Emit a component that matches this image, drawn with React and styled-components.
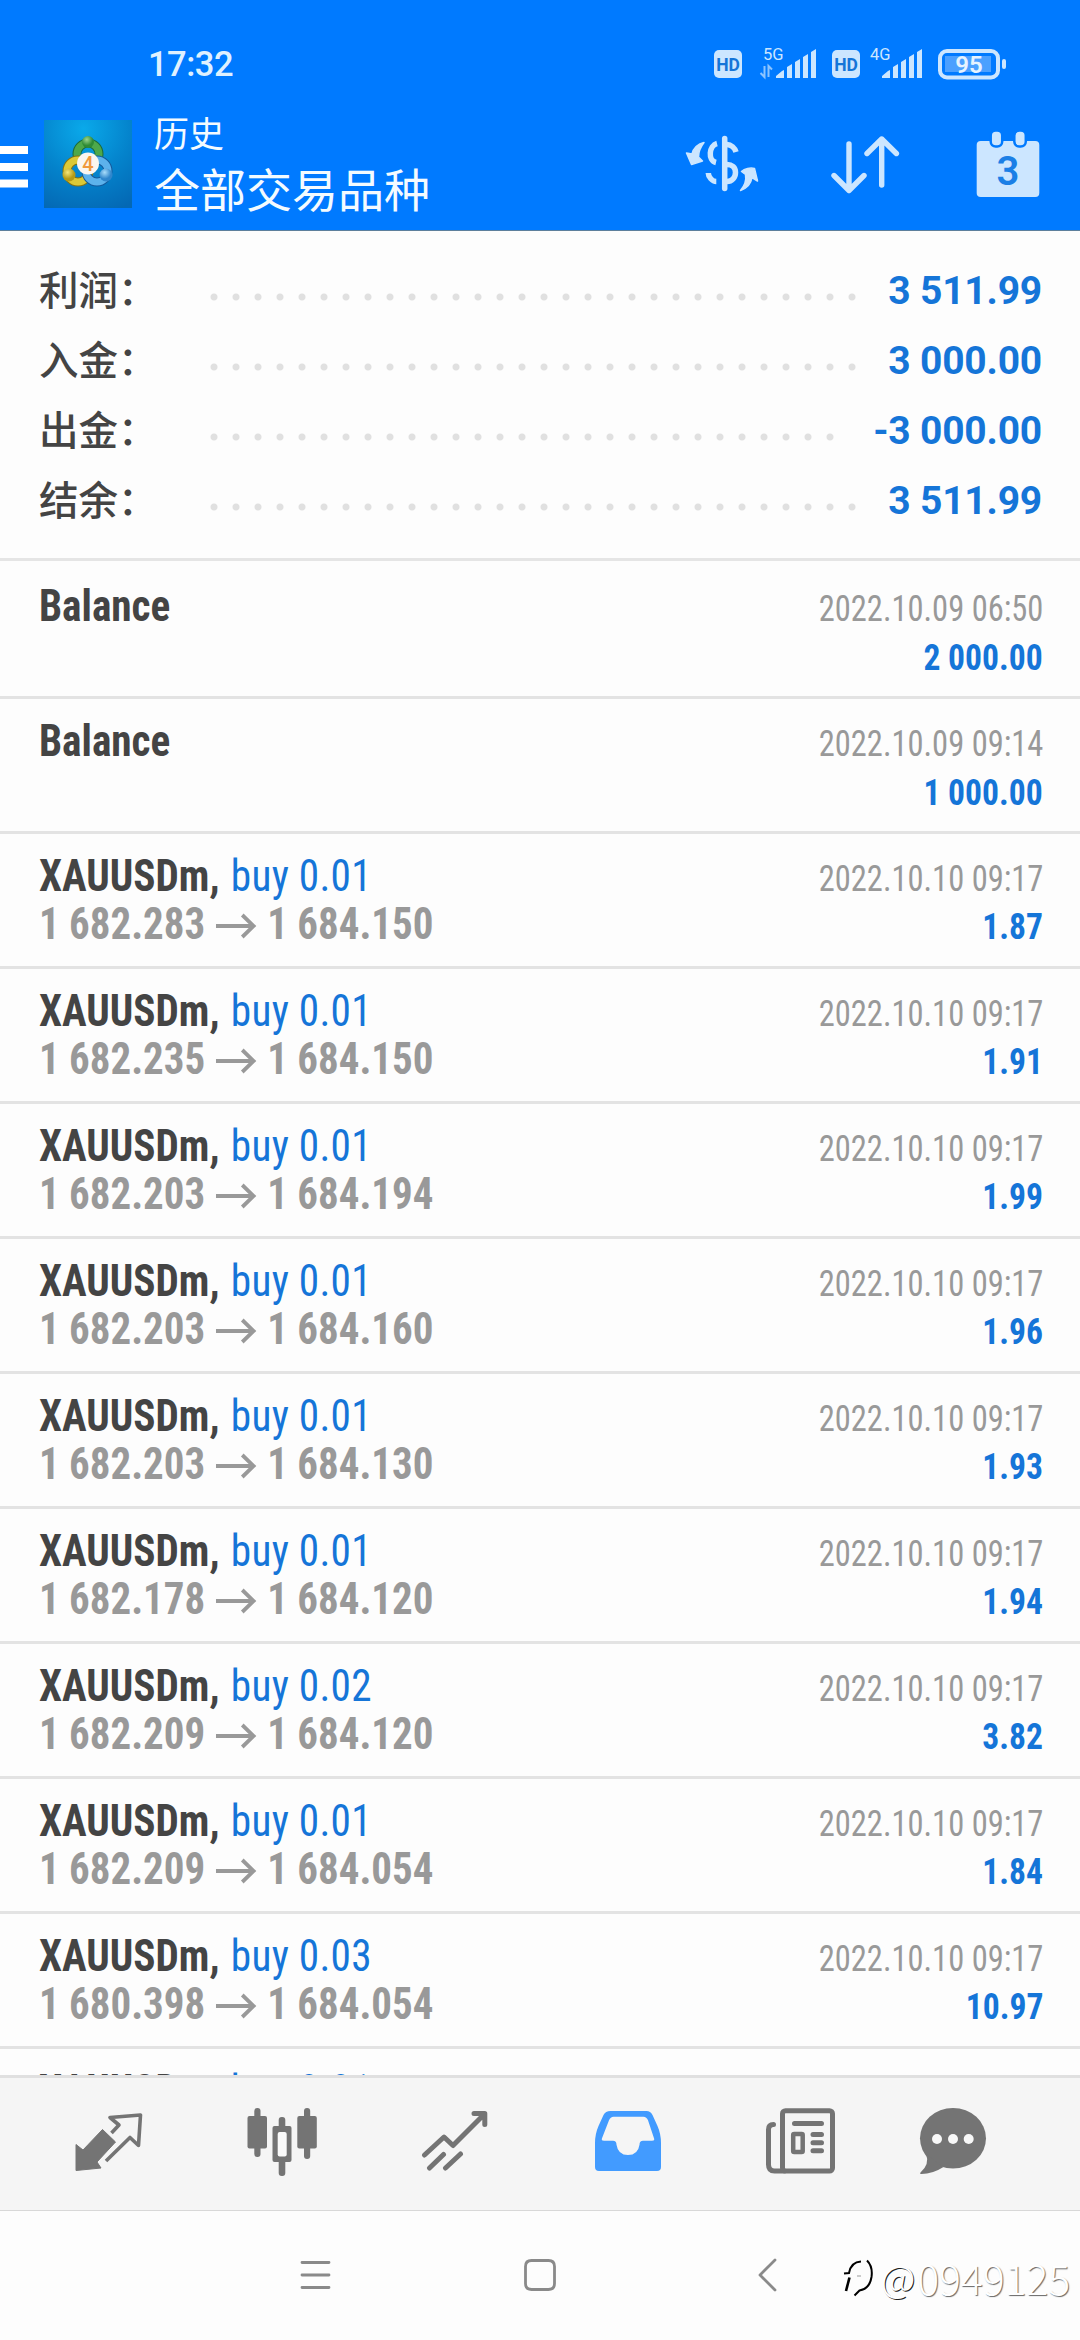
import React from "react";
import styled, { createGlobalStyle } from "styled-components";

const GlobalStyle = createGlobalStyle`
  * {
    box-sizing: border-box;
  }

  body {
    margin: 0;
    background: #fdfdfd;
    font-family: Roboto, "Noto Sans CJK SC", sans-serif;
  }

  svg {
    display: block;
    flex-shrink: 0;
  }
`;

const Screen = styled.div`
  display: flex;
  flex-direction: column;
  width: 1080px;
  height: 2340px;
  overflow: hidden;
  background: #fdfdfd;
`;

const Header = styled.header`
  height: 230px;
  flex-shrink: 0;
  background: #007aff;
  box-shadow: 0 1px 0 #5d7f9c;
`;

const StatusBar = styled.div`
  display: flex;
  align-items: center;
  justify-content: space-between;
  height: 96px;
  padding: 32px 72px 0 148px;
`;

const Clock = styled.span`
  font-size: 34.5px;
  font-weight: 500;
  line-height: 64px;
  letter-spacing: -0.5px;
  color: #dff1ff;
`;

const AppBar = styled.div`
  display: flex;
  align-items: center;
  height: 134px;
  padding: 2px 40px 0 0;
`;

const Titles = styled.div`
  display: flex;
  flex-direction: column;
  flex: 1;
  margin: 0 0 2px 22px;
  font-family: "Noto Sans CJK SC", sans-serif;
  font-weight: 400;
  color: #f4fbff;
`;

const Title = styled.span`
  font-size: 35px;
  line-height: 48px;
`;

const Subtitle = styled.span`
  font-size: 46px;
  line-height: 62px;
`;

const Logo = styled.div`
  margin-left: 16px;
`;

const Actions = styled.div`
  display: flex;
  align-items: center;
  gap: 72px;
`;

const Summary = styled.section`
  flex-shrink: 0;
  height: 331px;
  padding: 24px 38px 0 39px;
  border-bottom: 3px solid #e5e5e5;
`;

const SummaryRow = styled.div`
  display: flex;
  align-items: center;
  height: 70px;
`;

const SummaryLabel = styled.span`
  width: 164px;
  margin-bottom: 3px;
  font-family: "Noto Sans CJK SC", sans-serif;
  font-size: 39.5px;
  font-weight: 500;
  line-height: 70px;
  color: #444;
`;

const Leader = styled.span`
  width: ${({ $dots }) => $dots * 22}px;
  height: 8px;
  margin-top: 16px;
  background: radial-gradient(circle at 11px 4px, #e0e0e0 3px, transparent 4px) 0 0 / 22px 8px repeat-x;
`;

const SummaryValue = styled.span`
  flex: 1;
  margin-top: 3px;
  text-align: right;
  font-size: 39px;
  font-weight: 700;
  letter-spacing: -0.2px;
  white-space: nowrap;
  color: #1575d8;
`;

const List = styled.main`
  flex: 1;
  min-height: 0;
  overflow: hidden;
  padding-top: 3px;
`;

const Deal = styled.div`
  height: 135px;
  padding: 19px 37px 0 39px;
  border-bottom: 3px solid #e3e3e3;
  font-family: "Roboto Condensed", Roboto, sans-serif;
`;

const DealLine = styled.div`
  display: flex;
  align-items: baseline;
  justify-content: space-between;
  height: 48px;
  line-height: 48px;
  white-space: pre;
`;

const Symbol = styled.span`
  font-size: 43.5px;
  font-weight: 700;
  color: #444;
  transform: scaleX(0.947);
  transform-origin: left;
`;

const Side = styled.span`
  margin-left: 2px;
  font-weight: 400;
  letter-spacing: 0.3px;
  color: #1575d8;
`;

const Price = styled.span`
  display: flex;
  align-items: center;
  font-size: 43.5px;
  font-weight: 700;
  color: #999;
  transform: scaleX(0.941);
  transform-origin: left;
`;

const Arrow = styled.svg`
  margin: 2px 11px 0 11px;
`;

const Time = styled.span`
  font-size: 36.5px;
  color: #999;
  transform: scaleX(0.89);
  transform-origin: right;
`;

const Profit = styled.span`
  margin-left: auto;
  padding-top: ${({ $alone }) => ($alone ? 3 : 0)}px;
  font-size: 36.5px;
  font-weight: 700;
  color: #1575d8;
  transform: scaleX(0.92);
  transform-origin: right;
`;

const TabBar = styled.nav`
  display: flex;
  align-items: center;
  flex-shrink: 0;
  height: 136px;
  padding: 0 0 4px 22px;
  border-top: 3px solid #e0e0e0;
  border-bottom: 1px solid #d8d8d8;
  background: #f5f5f5;
  color: #747474;
`;

const Tab = styled.div`
  display: flex;
  justify-content: center;
  width: ${({ $narrow }) => ($narrow ? 130 : 173.2)}px;
  color: ${({ $active }) => ($active ? "#429bff" : "inherit")};
`;

const NavBar = styled.div`
  position: relative;
  display: flex;
  align-items: center;
  justify-content: center;
  gap: 191px;
  flex-shrink: 0;
  height: 129px;
  padding-bottom: 1px;
  color: #8a8a8a;
`;

const Watermark = styled.div`
  position: absolute;
  right: 10px;
  top: 34px;
  display: flex;
  align-items: center;
  font-family: "Noto Sans CJK SC", sans-serif;
  font-size: 41px;
  font-weight: 300;
  line-height: 64px;
  letter-spacing: -0.1px;
  color: #fff;
  text-shadow: 1px 1px 1px rgba(0, 0, 0, 0.6);
`;

const At = styled.span`
  margin: 0 2px 0 5px;
  font-size: 38px;
  font-weight: 300;
  text-shadow: 1px 1px 0 #222;
`;

const HdBadge = ({ x }) => (
  <g>
    <rect x={x} y="50" width="28" height="28" rx="5" fill="#cce6ff" />
    <text x={x + 14} y="70.5" textAnchor="middle" fontSize="17.5" fontWeight="700" fill="#1575d8">
      HD
    </text>
  </g>
);

const Signal = ({ x }) => (
  <path
    transform={`translate(${x} 0)`}
    fill="#cce6ff"
    d="M0 78v-2l6-5 2-1v8zM11 78v-11l5-3v14zM19 78v-16l5-3v19zM27 78v-21l5-3v24zM35 78v-26l5-3v29z"
  />
);

const StatusIcons = () => (
  <svg width="298" height="64" viewBox="710 32 298 64">
    <HdBadge x={714} />
    <text x="763" y="59.5" fontSize="16.5" fill="#cce6ff">5G</text>
    <path d="M764.5 66v11l-4-4M768.5 77v-11l3.5 3.5" fill="none" stroke="#8cc4ff" strokeWidth="2" />
    <Signal x={776} />
    <HdBadge x={832} />
    <text x="870" y="59.5" fontSize="16.5" fill="#cce6ff">4G</text>
    <Signal x={882} />
    <rect x="940" y="51" width="58" height="26.500" rx="7" fill="none" stroke="#cce6ff" strokeWidth="4" />
    <rect x="945" y="56" width="46" height="16" fill="#4ba0ff" />
    <text x="969" y="72.5" textAnchor="middle" fontSize="24" fontWeight="600" fill="#e6f3ff">95</text>
    <rect x="1002" y="59" width="4" height="10" rx="2" fill="#cce6ff" />
  </svg>
);

const MenuIcon = () => (
  <svg width="28" height="68" viewBox="0 130 28 68" fill="#fff">
    <path d="M0 146h28v8H0zM0 163h28v8H0zM0 179.500h28v8H0z" />
  </svg>
);

const AppLogo = () => (
  <svg width="88" height="88" viewBox="0 0 88 88">
    <defs>
      <radialGradient id="tile" cx="0.45" cy="0.1" r="1">
        <stop offset="0" stopColor="#0aa9ea" />
        <stop offset="0.55" stopColor="#0482cb" />
        <stop offset="1" stopColor="#0468b4" />
      </radialGradient>
      <radialGradient id="green" cx="0.4" cy="0.3">
        <stop offset="0" stopColor="#9ad48c" />
        <stop offset="1" stopColor="#2f8b35" />
      </radialGradient>
      <radialGradient id="yellow" cx="0.4" cy="0.3">
        <stop offset="0" stopColor="#f5e67a" />
        <stop offset="1" stopColor="#b49a16" />
      </radialGradient>
      <radialGradient id="sky" cx="0.4" cy="0.3">
        <stop offset="0" stopColor="#a8dcfa" />
        <stop offset="1" stopColor="#2f86cc" />
      </radialGradient>
    </defs>
    <rect width="88" height="88" fill="url(#tile)" />
    <g fill="none" strokeWidth="7">
      <circle cx="44" cy="34" r="11" stroke="#1c6a3a" strokeWidth="9" />
      <circle cx="44" cy="34" r="11" stroke="#4ea84a" />
      <circle cx="34" cy="51" r="11" stroke="#857312" strokeWidth="9" />
      <circle cx="34" cy="51" r="11" stroke="#dcc936" />
      <circle cx="53" cy="51" r="11" stroke="#145a9c" strokeWidth="9" />
      <circle cx="53" cy="51" r="11" stroke="#5cb2ec" />
    </g>
    <circle cx="44" cy="22" r="6" fill="url(#green)" />
    <circle cx="25" cy="55" r="6.500" fill="url(#yellow)" />
    <circle cx="62" cy="55" r="6.500" fill="url(#sky)" />
    <circle cx="44" cy="43.500" r="11" fill="#faf6f0" />
    <text x="44" y="50.500" textAnchor="middle" fontSize="20" fontWeight="500" fill="#f09a3c">4</text>
  </svg>
);

const CurrencyIcon = () => (
  <svg width="74" height="68" viewBox="685 130 74 68" fill="none" stroke="#cce6ff" strokeWidth="5.500">
    <path d="M724.700 138.500v50" strokeLinecap="round" />
    <path d="M717 143.500c-8 2-9.500 17-1 19M708.300 173c0 4 4 8.500 8 8.500M727 144.500c4 0 8 3.500 9 7.500M727 164.500c5 0 8.500 3 8.500 8s-3.500 9-8.500 9" />
    <path
      fill="#cce6ff"
      strokeWidth="1.500"
      strokeLinejoin="round"
      d="M704 142.500c-6 1-11 6-12 11.500l-5.500-1 5 11.500 11-3.500-4-4c0-6 2-10 5.500-14.500zM740.500 190.500c6-2 10.500-6.500 11.500-13l5.500 3.500-3-12.500c-4-1-10 0-13 3l4 3c1 6-1 11.500-5 16z"
    />
  </svg>
);

const SortIcon = () => (
  <svg width="73" height="68" viewBox="831 130 73 68" fill="none" stroke="#cce6ff" strokeWidth="5.400" strokeLinecap="round" strokeLinejoin="round">
    <path d="M849 144v46M834 175.500l15 15 15-15M881.700 185v-46M867 153.500l14.700-14.500 14.700 14.500" />
  </svg>
);

const CalendarIcon = () => (
  <svg width="64" height="68" viewBox="976 130 64 68">
    <rect x="976.700" y="141" width="62.600" height="56" rx="4" fill="#cce6ff" />
    <g fill="#cce6ff" stroke="#007aff" strokeWidth="2.500">
      <rect x="990.700" y="130.500" width="11.500" height="16" rx="5" />
      <rect x="1014.300" y="130.500" width="11.500" height="16" rx="5" />
    </g>
    <text x="1008" y="185" textAnchor="middle" fontSize="40" fontWeight="600" fill="#1b7fe6">3</text>
  </svg>
);

const QuotesIcon = () => (
  <svg width="68" height="68" viewBox="74.500 2108 68 68">
    <path d="M75.500 2170.500v-26l7 5.500 19.500-20.500 13 12.500-18.500 20 4 6z" fill="currentColor" stroke="currentColor" strokeLinejoin="round" />
    <path d="M111 2133l7.500-8-9-7.500 30.500-2.500-2 30.500-8.500-8-24 23.500" fill="none" stroke="currentColor" strokeWidth="3.600" strokeLinejoin="round" />
  </svg>
);

const ChartIcon = () => (
  <svg width="70" height="68" viewBox="246 2108 70 68" fill="currentColor">
    <rect x="253.300" y="2108" width="6.200" height="49" rx="3" />
    <rect x="246.500" y="2116" width="19.500" height="32.500" rx="2" />
    <rect x="277.700" y="2117" width="6.600" height="59" rx="3" />
    <rect x="271.500" y="2126" width="19" height="36" rx="2" />
    <rect x="276.700" y="2132" width="9" height="24.500" rx="2" fill="#fafafa" />
    <rect x="303" y="2108" width="6.200" height="51" rx="3" />
    <rect x="296.300" y="2116" width="19.500" height="32.500" rx="2" />
  </svg>
);

const TradeIcon = () => (
  <svg width="68" height="68" viewBox="420.500 2108 68 68" fill="none" stroke="currentColor" strokeWidth="5" strokeLinecap="round" strokeLinejoin="round">
    <path d="M424 2155l19.500-18 9 8.500 31.500-31.500M473.500 2113.500h10.800v11M429 2168l14-13.500M445 2168l15-14" />
  </svg>
);

const HistoryIcon = () => (
  <svg width="68" height="68" viewBox="593.500 2108 68 68" fill="currentColor" fillRule="evenodd">
    <path d="M610 2111h36q4 0 6 4l5 11q3.500 8 3.500 17v24q0 4-4 4h-58q-4 0-4-4v-24q0-9 3.500-17l5-11q2-4 7-4zM613 2116.700q-3 0-4.500 3.500l-7 18q-1 2.500 2 2.500h9q3.500 0 3.500 4 1.500 10.300 11.500 10.300t11.500-10.300q0-4 3.500-4h9q3 0 2-2.500l-6-18q-1.500-3.500-4.500-3.500z" />
  </svg>
);

const NewsIcon = () => (
  <svg width="72" height="68" viewBox="765.500 2108 72 68" fill="none" stroke="currentColor" strokeWidth="5" strokeLinecap="round">
    <path d="M774 2124.500q-5 0-5 5v35q0 6.500 6 6.500h10" />
    <rect x="783" y="2110.700" width="50" height="60.300" rx="3" />
    <path d="M795 2123.500h27M813.500 2134.500h8.500M813.500 2142.700h8.500M813.500 2150.700h8.500" />
    <rect x="793.700" y="2134" width="9.500" height="18" rx="1" strokeWidth="4.500" />
  </svg>
);

const ChatIcon = () => (
  <svg width="68" height="68" viewBox="919 2108 68 68" fill="currentColor">
    <ellipse cx="953" cy="2138.300" rx="33" ry="30.300" />
    <path d="M926 2154q4 10-5.500 18.500-1 1.500 1 1.500 11 0 22-7z" />
    <g fill="#f8f8f8">
      <circle cx="937" cy="2139" r="5" />
      <circle cx="953" cy="2139" r="5" />
      <circle cx="968.700" cy="2139" r="5" />
    </g>
  </svg>
);

const NavIcon = ({ d }) => (
  <svg width="34" height="36" viewBox="0 0 34 36" fill="none" stroke="currentColor" strokeWidth="2.800" strokeLinecap="round" strokeLinejoin="round">
    <path d={d} />
  </svg>
);

const WatermarkLogo = () => (
  <svg width="36" height="44" viewBox="0 0 36 44" fill="none" stroke="#000">
    <path d="M4 18.500l5-.5q2-11 12-11.500" strokeWidth="2" />
    <path d="M6 36l3.500-13.500" strokeWidth="2.600" />
    <path d="M27 5.500q6 6 4.500 16.500-2 12-12 13.500l-5 5" strokeWidth="2" />
    <path d="M17 21h4" stroke="#999" />
  </svg>
);

const summary = [
  { label: "利润：", value: "3 511.99", dots: 30 },
  { label: "入金：", value: "3 000.00", dots: 30 },
  { label: "出金：", value: "-3 000.00", dots: 29 },
  { label: "结余：", value: "3 511.99", dots: 30 },
];

const deals = [
  { time: "2022.10.09 06:50", profit: "2 000.00" },
  { time: "2022.10.09 09:14", profit: "1 000.00" },
  { lots: "0.01", open: "1 682.283", close: "1 684.150", profit: "1.87" },
  { lots: "0.01", open: "1 682.235", close: "1 684.150", profit: "1.91" },
  { lots: "0.01", open: "1 682.203", close: "1 684.194", profit: "1.99" },
  { lots: "0.01", open: "1 682.203", close: "1 684.160", profit: "1.96" },
  { lots: "0.01", open: "1 682.203", close: "1 684.130", profit: "1.93" },
  { lots: "0.01", open: "1 682.178", close: "1 684.120", profit: "1.94" },
  { lots: "0.02", open: "1 682.209", close: "1 684.120", profit: "3.82" },
  { lots: "0.01", open: "1 682.209", close: "1 684.054", profit: "1.84" },
  { lots: "0.03", open: "1 680.398", close: "1 684.054", profit: "10.97" },
];

const DealRow = ({ deal }) => (
  <Deal>
    <DealLine>
      <Symbol>
        {deal.lots ? "XAUUSDm, " : "Balance"}
        {deal.lots && <Side>buy {deal.lots}</Side>}
      </Symbol>
      {deal.profit && <Time>{deal.time || "2022.10.10 09:17"}</Time>}
    </DealLine>
    {deal.profit && (
      <DealLine>
        {deal.open && (
          <Price>
            {deal.open}
            <Arrow width="44" height="26" viewBox="0 0 44 26" fill="none" stroke="#999" strokeWidth="4">
              <path d="M0 13h40M28 2l12 11-12 11" />
            </Arrow>
            {deal.close}
          </Price>
        )}
        <Profit $alone={!deal.open}>{deal.profit}</Profit>
      </DealLine>
    )}
  </Deal>
);

const App = () => {
  return (
    <Screen>
      <GlobalStyle />
      <Header>
        <StatusBar>
          <Clock>17:32</Clock>
          <StatusIcons />
        </StatusBar>
        <AppBar>
          <MenuIcon />
          <Logo>
            <AppLogo />
          </Logo>
          <Titles>
            <Title>历史</Title>
            <Subtitle>全部交易品种</Subtitle>
          </Titles>
          <Actions>
            <CurrencyIcon />
            <SortIcon />
            <CalendarIcon />
          </Actions>
        </AppBar>
      </Header>

      <Summary>
        {summary.map((row) => (
          <SummaryRow key={row.label}>
            <SummaryLabel>{row.label}</SummaryLabel>
            <Leader $dots={row.dots} />
            <SummaryValue>{row.value}</SummaryValue>
          </SummaryRow>
        ))}
      </Summary>

      <List>
        {deals.map((deal, index) => (
          <DealRow key={index} deal={deal} />
        ))}
        {/* next deal, only its top edge shows above the tab bar */}
        <DealRow deal={{ lots: "0.01" }} />
      </List>

      <TabBar>
        <Tab><QuotesIcon /></Tab>
        <Tab><ChartIcon /></Tab>
        <Tab><TradeIcon /></Tab>
        <Tab $active><HistoryIcon /></Tab>
        <Tab><NewsIcon /></Tab>
        <Tab $narrow><ChatIcon /></Tab>
      </TabBar>

      <NavBar>
        <NavIcon d="M4 5.500h27M4 18h27M4 30.500h27" />
        <NavIcon d="M8.500 3.500h17q6 0 6 6v17q0 6-6 6h-17q-6 0-6-6v-17q0-6 6-6z" />
        <NavIcon d="M27 3L12 18l15 15" />
        <Watermark>
          <WatermarkLogo />
          <At>@</At>
          0949125
        </Watermark>
      </NavBar>
    </Screen>
  );
};

export default App;
